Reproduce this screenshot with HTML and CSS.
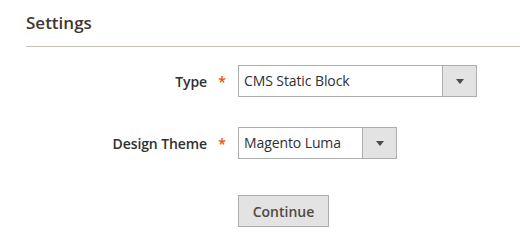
FILE: index.html
```html
<!DOCTYPE html>
<html lang="en">
<head>
<meta charset="utf-8">
<title>Settings</title>
<link rel="stylesheet" href="styles.css">
</head>
<body>
<div class="page">
  <h2 class="title">Settings</h2>
  <form class="form">
    <div class="field-label"><span>Type</span><span class="req">*</span></div>
    <div class="control">
      <div class="select select-type">
        <span class="value">CMS Static Block</span>
        <span class="arrow"><span class="tri"></span></span>
      </div>
    </div>
    <div class="field-label"><span>Design Theme</span><span class="req">*</span></div>
    <div class="control">
      <div class="select select-theme">
        <span class="value">Magento Luma</span>
        <span class="arrow"><span class="tri"></span></span>
      </div>
    </div>
    <div></div>
    <div class="control actions">
      <button type="button" class="btn">Continue</button>
    </div>
  </form>
</div>
</body>
</html>
```

FILE: styles.css
```css
html, body {
  margin: 0;
  padding: 0;
  background: #ffffff;
}
body {
  font-family: "Open Sans", "Noto Sans", "Liberation Sans", sans-serif;
  font-size: 14px;
  color: #303030;
}
.page {
  padding-left: 26px;
}
.title {
  margin: 0;
  padding-top: 11px;
  padding-bottom: 11px;
  font-size: 17px;
  line-height: 24px;
  font-weight: 600;
  color: #41362f;
  border-bottom: 1px solid #cac3b4;
}
.form {
  display: grid;
  grid-template-columns: 212px auto;
  row-gap: 30px;
  margin: 18px 0 0 0;
}
.field-label {
  display: flex;
  justify-content: flex-end;
  align-items: center;
  padding-right: 12px;
  font-weight: 600;
  color: #303030;
  letter-spacing: -0.1px;
}
.req {
  color: #eb5202;
  width: 8px;
  margin-left: 11px;
  font-size: 14px;
  text-align: center;
}
.control {
  display: flex;
}
.select {
  box-sizing: border-box;
  display: flex;
  height: 32px;
  border: 1px solid #adadad;
  background: #ffffff;
}
.select-type { width: 239px; }
.select-theme { width: 159px; }
.value {
  flex: 1;
  padding-left: 5px;
  line-height: 30px;
  color: #303030;
  white-space: nowrap;
  letter-spacing: -0.1px;
}
.arrow {
  width: 33px;
  border-left: 1px solid #adadad;
  background: #e3e3e3;
  display: flex;
  align-items: center;
  justify-content: center;
}
.tri {
  width: 0;
  height: 0;
  border-left: 4px solid transparent;
  border-right: 4px solid transparent;
  border-top: 5px solid #514943;
  margin-left: 1px;
}
.actions {
  margin-top: 6px;
}
.btn {
  box-sizing: border-box;
  width: 91px;
  height: 32px;
  padding: 0;
  border: 1px solid #adadad;
  background: #e3e3e3;
  color: #514943;
  font-family: "Open Sans", "Noto Sans", "Liberation Sans", sans-serif;
  font-size: 14px;
  font-weight: 600;
}
```
